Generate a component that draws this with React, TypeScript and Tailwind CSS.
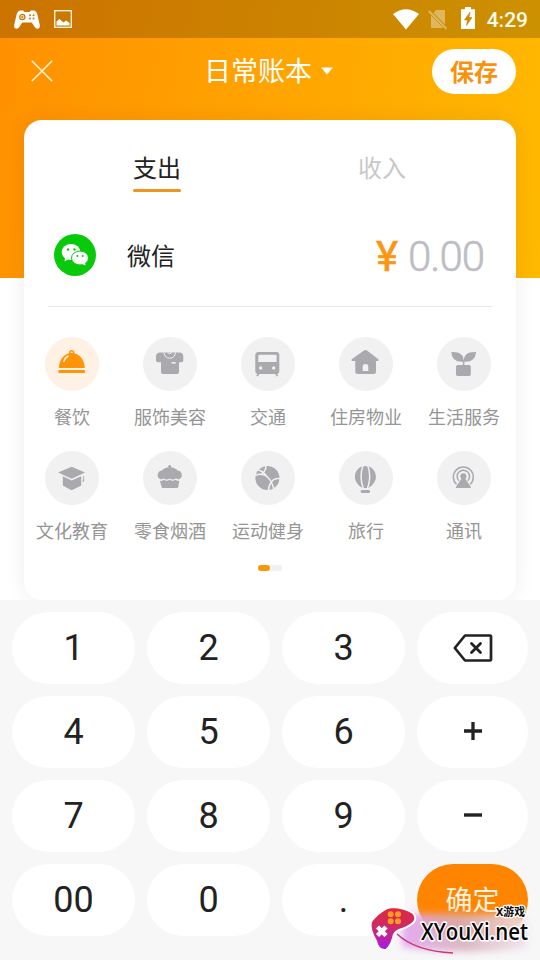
import { useState } from 'react';
import type { ReactNode } from 'react';

type Tab = 'expense' | 'income';

interface Category {
  name: string;
  icon: ReactNode;
}

// Ícones desenhados na grade 54x54 do círculo
const categories: Category[] = [
  {
    name: '餐饮',
    icon: (
      <>
        <path d="M13.8 31c.3-8 5-14.8 12.9-15 7.9.2 12.8 7 13.1 15z" fill="currentColor" />
        <circle cx="26.7" cy="15.6" r="1.9" fill="none" stroke="currentColor" strokeWidth="1.6" />
        <path d="M18.8 24.500q1.500-4 4.200-5.500" fill="none" stroke="#fff1e0" strokeWidth="1.500" strokeLinecap="round" />
        <rect x="13.3" y="33" width="26.7" height="3" rx="1.3" fill="currentColor" />
      </>
    ),
  },
  {
    name: '服饰美容',
    icon: (
      <>
        <path
          d="M16.500 15.500H37q3.300.5 3.300 4v4q0 1.800-1.800 1.800H36V35q0 2-2 2H20q-2 0-2-2v-9.700h-3q-2 0-2-1.800v-4q0-3.500 3.500-4z"
          fill="currentColor"
        />
        <path d="M20.800 15.500q1 5.700 5.900 5.700t5.900-5.700M24.500 15.500q2.200 2.500 4.400 0" fill="none" stroke="#f1f1f2" strokeWidth="1" />
        <path d="M28.500 25.8h4.200" stroke="#f1f1f2" strokeWidth="1.500" />
      </>
    ),
  },
  {
    name: '交通',
    icon: (
      <>
        <path
          fillRule="evenodd"
          d="M17.500 15h17.700q3.100 0 3.100 3v16q0 3-3 3h-18q-3 0-3-3V18q0-3 3.200-3zM18.3 17.8q-1 0-1 1V25h18.3v-6.200q0-1-1-1z"
          fill="currentColor"
        />
        <circle cx="19.7" cy="31" r="1.7" fill="#f1f1f2" />
        <circle cx="32.7" cy="31" r="1.7" fill="#f1f1f2" />
        <path d="M18.2 36l-2.200 3M34.4 36l2.200 3" stroke="currentColor" strokeWidth="1.8" />
      </>
    ),
  },
  {
    name: '住房物业',
    icon: (
      <>
        <path
          d="M25 13.500q1.500-1 3 0l11.3 8.8q1 1.400-.6 1.700H37v10.500q0 2.500-2.500 2.500H18.8q-2.500 0-2.500-2.500V24h-3q-1.600-.3-.6-1.700z"
          fill="currentColor"
        />
        <path d="M23.7 34v-4.200q0-2.800 2.800-2.800t2.800 2.800V34z" fill="#f1f1f2" />
      </>
    ),
  },
  {
    name: '生活服务',
    icon: (
      <>
        <path d="M14.3 15q13-.5 12.200 9.7Q14.500 25.500 14.3 15z" fill="currentColor" />
        <path d="M39 15q-12.700-.5-12.200 9.7Q38.800 25.500 39 15z" fill="currentColor" />
        <path d="M26.600 23v5" stroke="currentColor" strokeWidth="1.500" />
        <rect x="19" y="28" width="14.8" height="11" rx="1.8" fill="currentColor" />
      </>
    ),
  },
  {
    name: '文化教育',
    icon: (
      <>
        <path d="M26.7 15.7L40 21.600l-13.3 6.200-13.6-6.200z" fill="currentColor" />
        <path d="M17.8 25.300l8.900 4.200 9.500-4.200v9.200q-4 2.200-9.500 4.700-5-2.300-8.900-4.700z" fill="currentColor" />
        <path d="M38.2 25v3.500l-1 2h1.900V25z" fill="currentColor" />
      </>
    ),
  },
  {
    name: '零食烟酒',
    icon: (
      <>
        <circle cx="26.7" cy="15.5" r="1.5" fill="currentColor" />
        <path
          d="M17 28q-3.300-2-2-5.500 1-3 4-3 2-3 7.700-3.200 5.800.2 7.800 3.200 3 0 4 3 1.200 3.500-2 5.500-2 .8-3.500-.8-3 2.300-6.300.2-3.200 2.100-6.200-.2-1.500 1.600-3.500.8z"
          fill="currentColor"
        />
        <path d="M17 30q2.700 0 3.900-1.200 3 2 5.800 0 3 2 5.900 0 1.200 1.200 3.700 1.200L35.2 36q-.2 1-1.200 1H19.800q-1 0-1.200-1z" fill="currentColor" />
      </>
    ),
  },
  {
    name: '运动健身',
    icon: (
      <>
        <circle cx="26.4" cy="27" r="12" fill="currentColor" />
        <path
          d="M14 24.500q8-3.500 13 2t6 13M24.500 14.500q1.500 4-4 9M39 27.500q-6.500-.5-8.500 3.500-3 3.500-3 8.500M17 19q5 1 9 6.500"
          fill="none"
          stroke="#f1f1f2"
          strokeWidth="1.500"
        />
      </>
    ),
  },
  {
    name: '旅行',
    icon: (
      <>
        <path d="M26.4 15c6 0 10.500 4.800 10.500 10.700 0 4.800-3.500 9-7.700 11.300h-5.600c-4.200-2.300-7.700-6.500-7.700-11.300C15.900 19.800 20.400 15 26.400 15z" fill="currentColor" />
        <path d="M24 14.500q-4 11 .3 23M28.800 14.500q4 11-.3 23" fill="none" stroke="#f1f1f2" strokeWidth="1.500" />
        <rect x="21.7" y="39" width="9.300" height="3" rx="1.200" fill="currentColor" />
      </>
    ),
  },
  {
    name: '通讯',
    icon: (
      <>
        <path
          d="M19.500 33.200a10 10 0 1 1 13.7 0M22 29.800a6.200 6.200 0 1 1 8.700 0"
          fill="none"
          stroke="currentColor"
          strokeWidth="1.500"
        />
        <circle cx="26.4" cy="25.300" r="3" fill="currentColor" />
        <path d="M26.4 25l7.400 10.700q.5 1.300-.8 1.300H19.8q-1.300 0-.8-1.300z" fill="currentColor" />
      </>
    ),
  },
];

const keys = ['1', '2', '3', 'del', '4', '5', '6', '+', '7', '8', '9', '-', '00', '0', '.', 'ok'];

function StatusBar() {
  return (
    <div className="flex h-[38px] items-center justify-between bg-black/20 pr-[12px] pl-[14px]">
      <div className="flex items-center gap-[14px]">
        <svg width="26" height="19" viewBox="0 0 26 19">
          <path d="M6.500.5h2.500l1.500 1.500h5L17 .5h2.500q3 0 4 4.500l2.300 10q.5 3.700-2.300 3.700-1.700 0-3-2l-2.800-4.200H8.300L5.500 16.700q-1.300 2-3 2Q-.3 18.700.2 15L2.500 5q1-4.500 4-4.500z" fill="#fff" />
          <circle cx="8.3" cy="7" r="2.600" fill="none" stroke="#c97b00" strokeWidth="1.300" />
          <path d="M7 7h2.600M8.300 5.700v2.600" stroke="#c97b00" />
          <g fill="#c97b00">
            <circle cx="16" cy="5.200" r="1" />
            <circle cx="19.500" cy="5.200" r="1" />
            <circle cx="16" cy="8.500" r="1" />
            <circle cx="19.500" cy="8.500" r="1" />
          </g>
        </svg>
        <svg width="18" height="18" viewBox="0 0 18 18">
          <rect x=".7" y=".7" width="16.600" height="16.600" fill="none" stroke="#fff3d8" strokeWidth="1.400" />
          <path d="M2.500 15.500v-4l3-2.500 4 3.500 2.500-2 3.500 2.500v2.500z" fill="#fff" />
        </svg>
      </div>
      <div className="flex items-center">
        <svg width="26" height="21" viewBox="0 0 26 21">
          <path d="M0 5Q13-4.500 26 5L13 20.500z" fill="#fff" />
        </svg>
        <svg className="ml-[9px]" width="20" height="21" viewBox="0 0 20 21">
          <path d="M8 1h9v14.500L5.500 4zM3 6.500L15.500 19H3z" fill="#fff" opacity=".38" />
          <path d="M.8 2l17.700 17.700" stroke="#fff" strokeWidth="2" opacity=".38" />
        </svg>
        <svg className="mb-[2px] ml-[13px]" width="14" height="22" viewBox="0 0 14 22">
          <path d="M4 0h6v2.200h4V22H0V2.200h4z" fill="#fff" />
          <path d="M9 5L3.500 13h3l-1 5.500L11 10.500H8z" fill="#c98a00" stroke="#c98a00" strokeWidth=".6" />
        </svg>
        <span className="ml-[12px] pt-[2px] font-[Roboto,sans-serif] text-[21px] leading-[36px] font-medium text-[#fffbee]">4:29</span>
      </div>
    </div>
  );
}

function TitleBar() {
  return (
    <div className="flex h-[66px] items-center pr-6 pl-[31px] text-white">
      <svg width="22" height="22" viewBox="0 0 22 22" stroke="#fff3d8" strokeWidth="1.600">
        <path d="M.8.8l20.400 20.400M21.200.8L.8 21.200" />
      </svg>
      <div className="ml-[151px] flex items-center gap-[9px]">
        <span className="pb-[2px] text-[27px] leading-[38px]">日常账本</span>
        <svg width="12" height="8" viewBox="0 0 12 8">
          <path d="M0 .5h12L6 7.500z" fill="#fff" />
        </svg>
      </div>
      <button className="ml-auto h-[45px] w-[84px] rounded-full bg-white pb-[2px] text-[24px] leading-[43px] font-bold text-[#f8920c]">保存</button>
    </div>
  );
}

function WechatIcon() {
  return (
    <svg width="42" height="42" viewBox="0 0 42 42">
      <circle cx="21" cy="21" r="21" fill="#09c90b" />
      <ellipse cx="17" cy="18" rx="9.300" ry="8" fill="#fff" />
      <path d="M11 23.500l-.4 4 4-2.500z" fill="#fff" />
      <ellipse cx="26" cy="24" rx="8.500" ry="7" fill="#fff" stroke="#09c90b" strokeWidth="1" />
      <path d="M28 30l3.500 1.500-.5-3z" fill="#fff" />
      <g fill="#09c90b">
        <circle cx="14" cy="15.500" r="1.200" />
        <circle cx="20.500" cy="15.500" r="1.200" />
        <circle cx="23.400" cy="22" r="1" />
        <circle cx="28.700" cy="22" r="1" />
      </g>
    </svg>
  );
}

function KeyLabel({ value }: { value: string }) {
  switch (value) {
    case 'del':
      return (
        <svg width="40" height="28" viewBox="0 0 40 28" fill="none" stroke="#222" strokeLinejoin="round">
          <path d="M12 1.500h25q1 0 1 1v23q0 1-1 1H12L1.800 14z" strokeWidth="2.700" />
          <path d="M18.500 9.500l9 9M27.500 9.500l-9 9" strokeWidth="2.800" strokeLinecap="round" />
        </svg>
      );
    case '+':
      return (
        <svg className="mb-[2px]" width="18" height="18" viewBox="0 0 18 18" stroke="#222" strokeWidth="3.300">
          <path d="M0 9h18M9 0v18" />
        </svg>
      );
    case '-':
      return (
        <svg className="mb-[2px]" width="18" height="4" viewBox="0 0 18 4" stroke="#222" strokeWidth="3.400">
          <path d="M0 2h18" />
        </svg>
      );
    case 'ok':
      return <span className="pb-[3px] text-[27px] leading-[36px] text-[#fff3e0]">确定</span>;
    default:
      return <span>{value}</span>;
  }
}

function Watermark() {
  return (
    <div className="absolute right-0 bottom-0 h-[60px] w-[175px]">
      <svg width="175" height="60" viewBox="0 0 175 60" className="overflow-visible">
        <defs>
          <linearGradient id="pad" x1="0" y1="0" x2="0" y2="1">
            <stop offset="0" stopColor="#e02838" />
            <stop offset=".5" stopColor="#cc2a6c" />
            <stop offset="1" stopColor="#a818f0" />
          </linearGradient>
          <linearGradient id="haze" x1="0" y1="0" x2="1" y2="0">
            <stop offset="0" stopColor="#e3a0ee" />
            <stop offset=".5" stopColor="#d8b0bc" />
            <stop offset="1" stopColor="#f1e2ec" />
          </linearGradient>
          <filter id="soft" x="-20%" y="-40%" width="140%" height="180%">
            <feGaussianBlur stdDeviation="3.500" />
          </filter>
        </defs>
        <path d="M38 14h116l8 6v28q-60 8-125-1z" fill="url(#haze)" opacity=".88" filter="url(#soft)" />
        <path d="M32 34q18 17 56 19" fill="none" stroke="#c9387c" strokeWidth="1.500" />
        <path
          d="M8 19Q18 8 27 7q13 .5 21 6 4 5 1 9-5 5-15 8-5 2-6 8-2 8-7 12-8 1-10-9Q4 29 6 22z"
          fill="url(#pad)"
          stroke="#fff"
          strokeWidth="2"
        />
        <g fill="#ff9c24">
          <circle cx="25.700" cy="14.300" r="3" />
          <circle cx="33" cy="14.300" r="3" />
          <circle cx="25.700" cy="21.300" r="3" />
          <circle cx="33" cy="21.300" r="3" />
        </g>
        <path d="M12.500 27l8.500 8.500M21 27l-8.500 8.500" stroke="#fff" strokeWidth="4.500" />
        <g stroke="#fff" strokeLinejoin="round" paintOrder="stroke" fill="#080808">
          <text x="131" y="16" fontSize="11" fontWeight="700" strokeWidth="2.500" textLength="29" lengthAdjust="spacingAndGlyphs" fontFamily="'Noto Sans','Noto Sans CJK SC',sans-serif">
            X游戏
          </text>
          <text x="56" y="40" fontSize="24" fontWeight="600" strokeWidth="3" textLength="107" lengthAdjust="spacingAndGlyphs" fontFamily="'Open Sans',sans-serif">
            XYouXi.net
          </text>
        </g>
      </svg>
    </div>
  );
}

export default function App() {
  const [tab, setTab] = useState<Tab>('expense');
  const [selected, setSelected] = useState('餐饮');
  const [amount, setAmount] = useState('');

  const handleKey = (key: string) => {
    if (key === 'ok') return;
    setAmount(prev => (key === 'del' ? prev.slice(0, -1) : prev + key));
  };

  return (
    <div className="relative h-[960px] w-[540px] overflow-hidden bg-white font-['Noto_Sans_CJK_SC',sans-serif]">
      <div className="h-[278px] bg-[linear-gradient(100deg,#ff9000,#ffb900)]">
        <StatusBar />
        <TitleBar />
      </div>

      <div className="relative mx-6 -mt-[158px] h-[480px] rounded-[18px] bg-white shadow-[0_0_22px_rgba(0,0,0,0.07)]">
        <div className="flex h-[72px] pt-[27px] pl-[109px] text-[24px] leading-[40px]">
          <button
            onClick={() => setTab('expense')}
            className={tab === 'expense' ? 'flex w-12 flex-col text-[#222]' : 'flex w-12 flex-col text-[#c8c8ca]'}
          >
            支出
            {tab === 'expense' && <span className="mt-[2px] h-[3px] w-full rounded-full bg-[#ee9420]" />}
          </button>
          <button
            onClick={() => setTab('income')}
            className={tab === 'income' ? 'ml-[177px] flex w-12 flex-col text-[#222]' : 'ml-[177px] flex w-12 flex-col text-[#c8c8ca]'}
          >
            收入
            {tab === 'income' && <span className="mt-[2px] h-[3px] w-full rounded-full bg-[#ee9420]" />}
          </button>
        </div>

        <div className="mx-6 flex h-[115px] items-center border-b border-[#e8e8e8] pt-[12px] pr-[8px] pl-[6px]">
          <WechatIcon />
          <span className="ml-[31px] pb-[1px] text-[24px] leading-[35px] text-[#222]">微信</span>
          <span className="mt-[3px] ml-auto font-[Roboto,sans-serif] text-[42px] leading-[42px] text-[#fb9610] [-webkit-text-stroke:0.6px]">¥</span>
          <span className="mt-[3px] ml-[10px] font-[Roboto,sans-serif] text-[42px] leading-[42px] font-light tracking-[-1px] text-[#bdbdc4] [-webkit-text-stroke:0.6px]">
            {amount || '0.00'}
          </span>
        </div>

        <div className="-ml-px grid w-[490px] grid-cols-5 pt-[30px]">
          {categories.map(category => (
            <button key={category.name} onClick={() => setSelected(category.name)} className="flex h-[114px] flex-col items-center">
              <span
                className={
                  selected === category.name
                    ? 'h-[54px] w-[54px] rounded-full bg-[#fff1e3] text-[#ff9408]'
                    : 'h-[54px] w-[54px] rounded-full bg-[#f1f1f2] text-[#a9a9ae]'
                }
              >
                <svg width="54" height="54" viewBox="0 0 54 54">
                  {category.icon}
                </svg>
              </span>
              <span className="mt-[11px] text-[18px] leading-[28px] text-[#959595]">{category.name}</span>
            </button>
          ))}
        </div>

        <div className="mx-auto flex h-[6px] w-6 rounded-full bg-[#f1f1f2]">
          <span className="h-[6px] w-[12px] rounded-full bg-[#fa960c]" />
        </div>
      </div>

      <div className="relative grid h-[360px] grid-cols-[123px_123px_123px_111px] grid-rows-[repeat(4,72px)] gap-[12px] bg-[#f7f7f7] p-[12px]">
        {keys.map(key => (
          <button
            key={key}
            onClick={() => handleKey(key)}
            className={
              key === 'ok'
                ? 'flex items-center justify-center rounded-[36px] bg-[#ff8500]'
                : 'flex items-center justify-center rounded-[36px] bg-white font-[Roboto,sans-serif] text-[36px] leading-[36px] text-[#222]'
            }
          >
            <KeyLabel value={key} />
          </button>
        ))}
      </div>

      <Watermark />
    </div>
  );
}
